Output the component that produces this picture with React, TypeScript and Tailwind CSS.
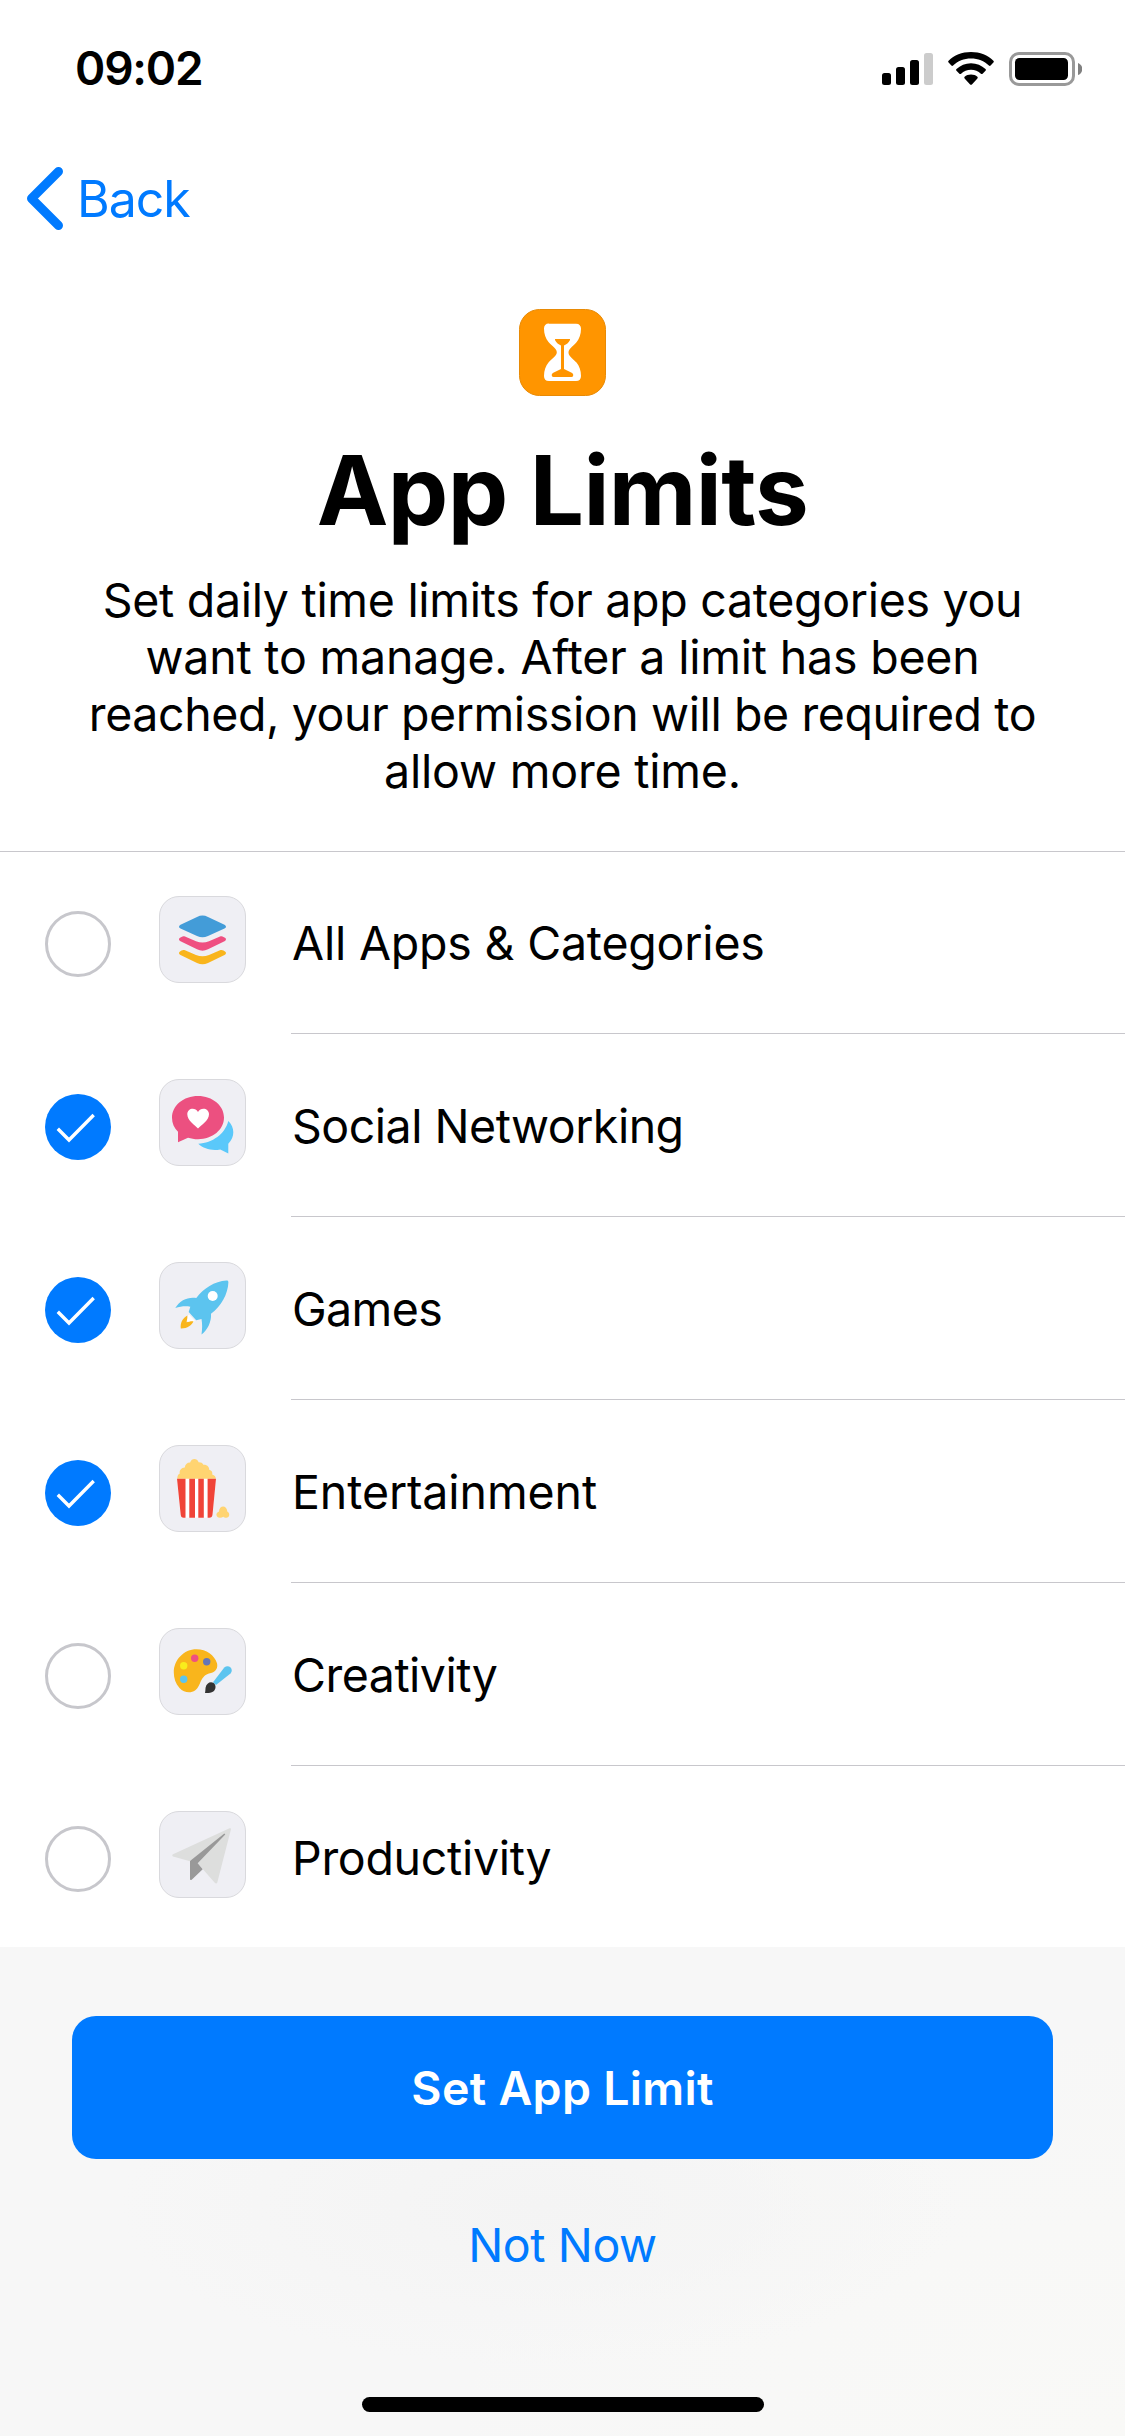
import React, { useState } from "react";

const initialCategories = [
  { id: "all", label: "All Apps & Categories", icon: <LayersIcon />, checked: false, tracking: "tracking-[-0.2px]" },
  { id: "social", label: "Social Networking", icon: <ChatIcon />, checked: true, tracking: "tracking-[-0.5px]" },
  { id: "games", label: "Games", icon: <RocketIcon />, checked: true, tracking: "tracking-[-0.6px]" },
  { id: "entertainment", label: "Entertainment", icon: <PopcornIcon />, checked: true, tracking: "tracking-[-0.1px]" },
  { id: "creativity", label: "Creativity", icon: <PaletteIcon />, checked: false, tracking: "tracking-[-0.5px]" },
  { id: "productivity", label: "Productivity", icon: <PlaneIcon />, checked: false, tracking: "tracking-[-0.3px]" },
];

export default function App() {
  const [categories, setCategories] = useState(initialCategories);

  const toggle = (id: string) => {
    setCategories((prev) =>
      prev.map((c) => (c.id === id ? { ...c, checked: !c.checked } : c))
    );
  };

  return (
    <div className="flex h-[2436px] w-[1125px] flex-col overflow-hidden bg-white font-['Inter',sans-serif] text-black">
      <StatusBar />

      <nav className="pt-[69px] pl-[27px]">
        <button className="flex h-[63px] items-center gap-[13px] text-[50px] leading-[60px] tracking-[-1px] text-[#007aff]">
          <svg width="37" height="63" viewBox="0 0 37 63" fill="none">
            <path
              d="M31.500 4.500 4.500 31.500l27 27"
              stroke="currentColor"
              strokeWidth="9"
              strokeLinecap="round"
              strokeLinejoin="round"
            />
          </svg>
          Back
        </button>
      </nav>

      <header className="flex flex-col items-center pt-[79px] text-center">
        <HourglassIcon />
        <h1 className="mt-[34px] text-[96px] leading-[120px] font-bold tracking-[-0.6px]">
          App Limits
        </h1>
        <p className="mt-[22px] flex flex-col text-[46.5px] leading-[57px] tracking-[-0.2px] whitespace-nowrap">
          <span className="tracking-[-0.3px]">Set daily time limits for app categories you</span>
          <span>want to manage. After a limit has been</span>
          <span className="tracking-[-0.4px]">reached, your permission will be required to</span>
          <span>allow more time.</span>
        </p>
      </header>

      <ul className="mt-[51px] border-t border-[#c8c7cc]">
        {categories.map((c, i) => (
          <li
            key={c.id}
            className="flex h-[183px] cursor-pointer items-start pl-[45px]"
            onClick={() => toggle(c.id)}
          >
            <div className="mt-[59px]">
              <CheckCircle checked={c.checked} />
            </div>
            <div className="mt-[44px] ml-12 h-[87px] w-[87px] shrink-0 rounded-[20px] border border-[#d9d9dd] bg-[#efeff4]">
              <div className="-m-px">{c.icon}</div>
            </div>
            <div
              className={`ml-[45px] h-[182px] flex-1 pt-[61px] pl-px ${
                i < categories.length - 1 ? "border-b border-[#c8c7cc]" : ""
              }`}
            >
              <span className={`block text-[46.5px] leading-[60px] ${c.tracking}`}>
                {c.label}
              </span>
            </div>
          </li>
        ))}
      </ul>

      <footer className="-mt-[3px] flex flex-1 flex-col items-center bg-[#f7f7f7] bg-[radial-gradient(ellipse_420px_160px_at_48%_53%,#f4f4f4,transparent),radial-gradient(ellipse_700px_420px_at_100%_100%,#f9f9f7,transparent)] pt-[69px]">
        <button className="h-[143px] w-[981px] rounded-[24px] bg-[#007aff] text-[46.5px] leading-[60px] font-semibold tracking-[0.3px] text-white">
          Set App Limit
        </button>
        <button className="mt-[56px] text-[46.5px] leading-[60px] tracking-[-0.4px] text-[#007aff]">
          Not Now
        </button>
        <div className="mt-auto mb-6 h-[15px] w-[402px] rounded-full bg-black" />
      </footer>
    </div>
  );
}

function StatusBar() {
  return (
    <div className="flex items-start justify-between pt-[38px] pr-[43px] pl-[75px]">
      <span className="text-[46px] leading-[60px] font-semibold tracking-[-1.2px]">09:02</span>
      <div className="mt-[14px] flex">
        <svg width="51" height="34" viewBox="0 0 51 34">
          <rect x="0" y="21" width="9" height="12" rx="2.5" />
          <rect x="14" y="15" width="9" height="18" rx="2.5" />
          <rect x="28" y="8" width="9" height="25" rx="2.5" />
          <rect x="42" y="1" width="9" height="32" rx="2.5" fill="#cccccc" />
        </svg>
        <svg className="ml-[15px]" width="46" height="34" viewBox="0 0 46 34">
          <path d="M23 0C14 0 6 3.300.6 8.800c-.6.6-.6 1.200 0 1.800l2.800 2.900c.5.500 1.200.5 1.700 0C9.700 9 16 6.500 23 6.500S36.300 9 40.900 13.500c.5.5 1.200.5 1.700 0l2.800-2.900c.6-.6.6-1.200 0-1.800C40 3.300 32 0 23 0Z" />
          <path d="M23 11.200c-5.600 0-10.700 2.200-14.500 5.800-.6.600-.6 1.200 0 1.800l2.900 2.900c.5.500 1.100.5 1.700 0 2.600-2.500 6.100-4 9.900-4s7.300 1.500 9.900 4c.6.500 1.200.5 1.700 0l2.900-2.900c.6-.6.6-1.200 0-1.800C33.700 13.400 28.600 11.200 23 11.200Z" />
          <path d="M23 22.500c-2.500 0-4.800.9-6.400 2.300-.5.500-.5 1.100 0 1.600l5.500 6c.5.600 1.300.6 1.800 0l5.500-6c.5-.5.5-1.100 0-1.600-1.600-1.400-3.900-2.300-6.400-2.300Z" />
        </svg>
        <svg className="ml-[15px]" width="73" height="34" viewBox="0 0 73 34">
          <rect x="1.500" y="1.500" width="63" height="31" rx="8.500" fill="none" stroke="#999999" strokeWidth="3" />
          <rect x="6" y="6" width="53" height="22" rx="4.500" />
          <path d="M69 11c2.700 1 4.300 3.400 4.300 6s-1.600 5-4.300 6Z" fill="#808080" />
        </svg>
      </div>
    </div>
  );
}

function CheckCircle({ checked }: { checked: boolean }) {
  return (
    <svg width="66" height="66" viewBox="0 0 66 66" fill="none">
      {checked ? (
        <>
          <circle cx="33" cy="33" r="33" fill="#007aff" />
          <path d="M12.800 34.800 24 46 48.700 21" stroke="white" strokeWidth="3.400" />
        </>
      ) : (
        <circle cx="33" cy="33" r="31.500" stroke="#c7c7cc" strokeWidth="3" />
      )}
    </svg>
  );
}

function HourglassIcon() {
  return (
    <svg width="87" height="87" viewBox="0 0 87 87">
      <rect x=".5" y=".5" width="86" height="86" rx="20" fill="#ff9500" stroke="#e88a05" />
      <path
        d="M30 14.700h27c3.400 0 5 2 5 5 0 5.500-1.700 10-4.500 13.500-2.700 3.500-8 6.300-8 10.200s5.300 6.700 8 10.200C60.300 57 62 61.500 62 67c0 3-1.600 5-5 5H30c-3.400 0-5-2-5-5 0-5.500 1.700-10 4.500-13.500 2.700-3.500 8.300-6.300 8.300-10.200s-5.600-6.700-8.300-10.200c-2.800-3.500-4.500-8-4.500-13.500 0-3 1.600-5 5-5Z"
        fill="white"
      />
      <path
        d="M36.500 30h14c.6 0 .7.700.4 1.200-1.400 2.600-3.300 4.200-5.900 5.300V60l7.700 3.700c1.600.8 1.800 2.200 1.300 3.500-.2.600-.8.800-1.500.8h-18c-.7 0-1.300-.2-1.500-.8-.5-1.300-.3-2.700 1.300-3.500L42 60V36.500c-2.600-1.100-4.500-2.700-5.900-5.300-.3-.5-.2-1.200.4-1.200Z"
        fill="#ff9500"
      />
    </svg>
  );
}

function LayersIcon() {
  return (
    <svg width="87" height="87" viewBox="0 0 87 87">
      <path
        d="M38 21c3.800-1.900 7.200-1.900 11 0l16.500 7.700c2 1 2 2.800 0 3.800L49 40c-3.800 1.800-7.200 1.800-11 0l-16.500-7.500c-2-1-2-2.800 0-3.800Z"
        fill="#439cd8"
      />
      <path
        d="M26 40.600 37 45.300c4.500 1.700 8.500 1.700 13 0l11-4.700c1.200-.5 2.300-.4 3.500.3l1.500.9c1.500 1 1.300 2.700-.5 3.500L49 53.300c-3.800 1.800-7.200 1.800-11 0L21.500 45.300c-1.800-.8-2-2.500-.5-3.500l1.500-.9c1.200-.7 2.300-.8 3.500-.3Z"
        fill="#ef4f81"
      />
      <path
        d="M26 54.200 37 58.900c4.500 1.700 8.500 1.700 13 0l11-4.700c1.200-.5 2.300-.4 3.500.3l1.500.9c1.500 1 1.300 2.700-.5 3.500L49 66.900c-3.800 1.800-7.200 1.800-11 0L21.500 58.900c-1.800-.8-2-2.500-.5-3.500l1.500-.9c1.200-.7 2.300-.8 3.500-.3Z"
        fill="#f9b51c"
      />
    </svg>
  );
}

function ChatIcon() {
  return (
    <svg width="87" height="87" viewBox="0 0 87 87">
      <path
        d="M39 17c14.500 0 26 9.500 26 21.600S53.500 60.300 39 60.300c-3.600 0-7-.6-10-1.500l-10 4.500V52.700c-3.800-3.700-6-8.600-6-14C13 26.500 24.500 17 39 17Z"
        fill="#ec5080"
      />
      <path
        d="M39 49.500c-3-3.200-10.700-7.900-10.700-14.300 0-6 7.700-7.700 10.700-2.200 3-5.500 11-3.800 11 2.200 0 6.400-8 11.100-11 14.300Z"
        fill="white"
      />
      <path
        d="M69.300 42c6.600 6.500 6.800 15.800 0 22.700v9.700l-8-4c-8.600 1.600-16.500-.6-22-5.700C53.500 64 66 55 69.300 42Z"
        fill="#5ac8fa"
      />
    </svg>
  );
}

function RocketIcon() {
  return (
    <svg width="87" height="87" viewBox="0 0 87 87">
      <path
        d="M67.500 18.500c1.200-.1 1.900.5 1.900 1.700-.5 12-7 23.500-17.400 31.600.7 7.500-3.500 16.700-9.500 20.600.8-5.200.9-10.500 0-15.400l-5.300 1.300-7.500-8.300 1.600-5.300c-4.500-.8-9.800-.4-15 1.300C21 38 29.500 34.500 37.300 36 44.500 26.500 55.500 19.200 67.500 18.500Z"
        fill="#5cc4ef"
      />
      <circle cx="53.700" cy="34" r="5" fill="white" />
      <path d="M30 52.500 36 59l-4.500 2.500-4-3 .8-4Z" fill="white" />
      <path
        d="M28.300 53.500c.3 2.300-.3 4.500-.8 6.800 2-.4 4.300-1.300 7-1-1.700 4-6 7.300-12.700 7.200-.6-5.500 1.500-10 6.500-13Z"
        fill="#f9b51c"
      />
    </svg>
  );
}

function PopcornIcon() {
  return (
    <svg width="87" height="87" viewBox="0 0 87 87">
      <path
        d="M18.300 34c0-3 .7-4.700 2.500-5.500-.6-3 1.400-5.800 5-6 .2-3 2.200-5 5.300-5 1.500-4.500 7-4.500 8.500-.3 2.300-.1 4 .7 4.800 2.500 3.400-.3 6 2 5.800 5 2.600.6 3.600 2.500 3 4.800 2.500.7 3.800 2.300 3.500 4.500Z"
        fill="#ffd471"
      />
      <path d="M18 33.700h39l-3.500 36c-.2 2-1.300 3-3 3h-26c-1.700 0-2.800-1-3-3Z" fill="white" />
      <path
        d="M18 33.700h8.500v39h-2c-1.700 0-2.600-1-2.800-3ZM30.300 33.700H36v39h-5.700ZM39.300 33.700h5.500v39h-5.500ZM48.600 33.700H57l-3.500 36c-.2 2-1.300 3-3 3h-1.900Z"
        fill="#f04438"
      />
      <path
        d="M60 66.500c0-6 7.600-7.300 8.300 0 3 1.500 2.500 6.200-1 6.200-1.300 0-2.200-.3-3-1-1 .7-2 1-3.300 1-4.200 0-4.800-4.800-1-6.200Z"
        fill="#ffd471"
      />
    </svg>
  );
}

function PaletteIcon() {
  return (
    <svg width="87" height="87" viewBox="0 0 87 87">
      <path
        d="M37.500 21.300c10 0 18 6 20.500 14 1.200 5-1.500 8.700-6 9.700-12 2.500-9 12.500-16 17.500-4 2.800-11 2.500-15.500-2.500-4-4.500-5.700-10-5.700-15.500 0-12.500 10-23.200 22.700-23.200Z"
        fill="#f9b51c"
      />
      <circle cx="35.700" cy="30.300" r="3.700" fill="#ef4f81" />
      <circle cx="47.700" cy="33.700" r="3.700" fill="#6675b5" />
      <circle cx="24.700" cy="37.700" r="3.700" fill="#f9ec1c" />
      <circle cx="24.700" cy="51.300" r="3.700" fill="#5cc4ef" />
      <path
        d="M65.300 39.500c2-1.700 4.500-1.700 6.200 0s1.700 4 0 6L57 57l-3-2.700Z"
        fill="#5cc4ef"
      />
      <path
        d="M46 65c.5-2 .3-3.500.6-5.500.8-4.500 5-6.600 8-4.500 2.800 2 2.500 6.500-.3 8.500-2.500 1.700-5 1.500-8.300 1.500Z"
        fill="#333333"
      />
    </svg>
  );
}

function PlaneIcon() {
  return (
    <svg width="87" height="87" viewBox="0 0 87 87">
      <path
        d="M70.500 17.300 14 43.300c-1 .6-1 1.700 0 2.200L31 50.300 66 22.800 38.700 52.300 56 72c.8.800 1.900.6 2.300-.4L71.900 18.500c.2-1-.4-1.600-1.400-1.200Z"
        fill="#dddedd"
      />
      <path d="M31 50 65 22.800c.8-.5 1.500.2 1 .9L38.700 52.300l5 6-11 10.500c-.8.600-1.700.3-1.700-.8Z" fill="#999999" />
    </svg>
  );
}
